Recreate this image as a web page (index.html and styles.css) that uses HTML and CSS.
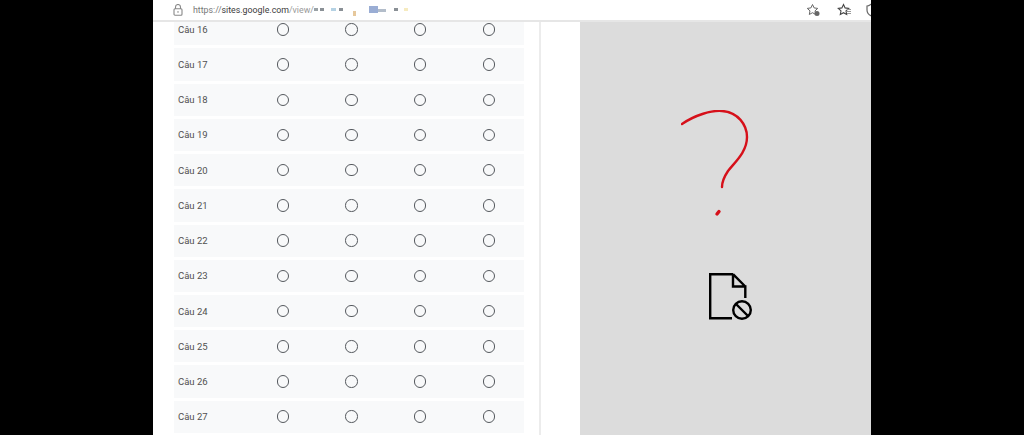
FILE: index.html
```html
<!DOCTYPE html>
<html lang="en">
<head>
    <meta charset="UTF-8" />
    <meta name="viewport" content="width=device-width, initial-scale=1.0"/>
    <title>Sites</title>
    <link rel="stylesheet" href="styles.css">
</head>
<body>
    <div class="screen">
        <div class="addressbar">
            <svg class="lock" width="10" height="12" viewBox="0 0 10 12">
                <path d="M2.500 5V3a2.500 2.500 0 0 1 5 0V5" fill="none" stroke="#888" stroke-width="1.100"/>
                <rect x="1" y="4.800" width="8" height="6.400" rx="1" fill="none" stroke="#888" stroke-width="1.100"/>
                <rect x="4.300" y="7.300" width="1.400" height="1.300" fill="#888"/>
            </svg>
            <div class="url"><span class="url-scheme">https://</span><span class="url-main">sites.google.com</span><span class="url-path">/view/</span></div>
            <div class="blur-bits">
                <i class="bit b1"></i><i class="bit b2"></i><i class="bit b3"></i><i class="bit b4"></i>
                <i class="bit b5"></i><i class="bit b6"></i><i class="bit b7"></i><i class="bit b8"></i><i class="bit b9"></i>
            </div>
            <div class="bar-icons">
                <svg class="star-add" width="15" height="14" viewBox="0 0 15 14">
                    <path d="M6.500 1.500l1.600 3.400 3.600.5-2.700 2.500.7 3.600-3.200-1.800-3.200 1.800.7-3.600L1.300 5.400l3.600-.5z" fill="none" stroke="#666" stroke-width="1"/>
                    <circle cx="11" cy="10.500" r="2.500" fill="#666"/>
                </svg>
                <svg width="15" height="14" viewBox="0 0 15 14">
                    <path d="M6.500 1.500l1.600 3.400 3.600.5-2.700 2.500.7 3.600-3.200-1.800-3.200 1.800.7-3.600L1.300 5.400l3.600-.5z" fill="none" stroke="#444" stroke-width="1.100"/>
                    <path d="M10 6.500h4M10 8.500h4M10 10.500h4" stroke="#999" stroke-width="1"/>
                </svg>
                <svg width="15" height="14" viewBox="0 0 15 14">
                    <path d="M2 3c2 0 3-1 4.500-2C8 2 9 3 11 3v4c0 3-2 5-4.500 6C4 12 2 10 2 7z" fill="none" stroke="#666" stroke-width="1.200"/>
                </svg>
            </div>
        </div>
        <div class="content">
            <div class="form-col">
                <div class="rows" id="rows"></div>
            </div>
            <div class="preview">
                <svg class="question" width="70" height="107" viewBox="0 0 70 107">
                    <path d="M1 14C14 5 31 0 41 1C57 2 66 15 66 27C66 42 54 52 47 61C43 67 41 72 41 77" fill="none" stroke="#d6101a" stroke-width="2.400" stroke-linecap="round"/>
                    <path d="M36 104L38 101.500" fill="none" stroke="#d6101a" stroke-width="3.400" stroke-linecap="round"/>
                </svg>
                <svg class="nofile" width="44" height="48" viewBox="0 0 44 48">
                    <path d="M24 1.200H1.200V45.200H23" fill="none" stroke="#000" stroke-width="2.400"/>
                    <path d="M24 1.200V13.500H36.300V25M24 1.200L36.300 13.500" fill="none" stroke="#000" stroke-width="2.400"/>
                    <circle cx="33" cy="37" r="8.800" fill="none" stroke="#000" stroke-width="2.400"/>
                    <path d="M27 31L39 43" stroke="#000" stroke-width="2.400"/>
                </svg>
            </div>
        </div>
    </div>
    <script>
        const rows = document.getElementById('rows');
        for (let n = 16; n <= 27; n++) {
            const row = document.createElement('div');
            row.className = 'row';
            const label = document.createElement('div');
            label.className = 'row-label';
            label.textContent = 'Câu ' + n;
            row.appendChild(label);
            for (let i = 0; i < 4; i++) {
                const cell = document.createElement('div');
                cell.className = 'cell';
                cell.innerHTML = '<span class="radio"></span>';
                row.appendChild(cell);
            }
            rows.appendChild(row);
        }
    </script>
</body>
</html>
```

FILE: styles.css
```css
html, body {
    margin: 0;
    padding: 0;
    height: 100%;
    background-color: #000;
    overflow: hidden;
}

body {
    font-family: Roboto, Arial, sans-serif;
    display: flex;
    justify-content: flex-start;
}

.screen {
    width: 718px;
    height: 435px;
    margin-left: 153px;
    background-color: #fff;
    display: flex;
    flex-direction: column;
    overflow: hidden;
}

.addressbar {
    position: relative;
    z-index: 2;
    flex: none;
    height: 20px;
    background-color: #fff;
    border-bottom: 2px solid #e6e6e6;
    display: flex;
    align-items: center;
    padding-left: 20px;
    font-size: 8.800px;
}

.lock {
    flex: none;
    margin-right: 10px;
}

.url {
    white-space: nowrap;
}

.url-scheme {
    color: #777;
}

.url-main {
    color: #3c3c3c;
}

.url-path {
    color: #999;
}

.blur-bits {
    display: flex;
    align-items: flex-start;
    height: 12px;
}

.bit {
    display: block;
    width: 4px;
    height: 3px;
    margin-top: 4px;
}

.b1 { margin-right: 2px; background-color: #9aa2a6; }
.b2 { margin-right: 7px; background-color: #8a9096; }
.b3 { width: 5px; margin-right: 3px; background-color: #b5d2e4; }
.b4 { margin-right: 10px; background-color: #8a9096; }
.b5 { width: 3px; height: 5px; margin: 7px 13px 0 0; background-color: #e6c89c; }
.b6 { width: 9px; height: 7px; margin: 2px 0 0 0; background-color: #9aadd4; }
.b7 { width: 8px; margin: 5px 8px 0 0; background-color: #b3bdca; }
.b8 { margin-right: 6px; background-color: #8a9096; }
.b9 { background-color: #f6ebc0; }

.bar-icons {
    margin-left: auto;
    display: flex;
    gap: 13px;
    margin-right: -9px;
}

.star-add {
    margin-right: 3px;
}

.content {
    flex: 1;
    display: flex;
    min-height: 0;
}

.form-col {
    flex: none;
    width: 388px;
    border-right: 2px solid #ececec;
    padding-left: 21px;
    box-sizing: border-box;
    margin-right: 39px;
}

.rows {
    width: 350px;
    margin-top: -8.800px;
}

.row {
    height: 32.230px;
    margin-bottom: 3px;
    background-color: #f8f9fa;
    display: grid;
    grid-template-columns: 74.500px repeat(4, 68.700px);
    align-items: center;
}

.row-label {
    padding-left: 4px;
    font-size: 9.500px;
    color: #505050;
}

.cell {
    display: flex;
    justify-content: center;
}

.radio {
    display: block;
    width: 10.500px;
    height: 10.500px;
    border: 1.800px solid #55595e;
    border-radius: 50%;
}

.preview {
    flex: 1;
    background-color: #dcdcdc;
    display: flex;
    flex-direction: column;
    align-items: center;
    padding-top: 88px;
    gap: 56px;
}

.question {
    margin-left: -20px;
}

.nofile {
    margin-left: 10px;
}
```
